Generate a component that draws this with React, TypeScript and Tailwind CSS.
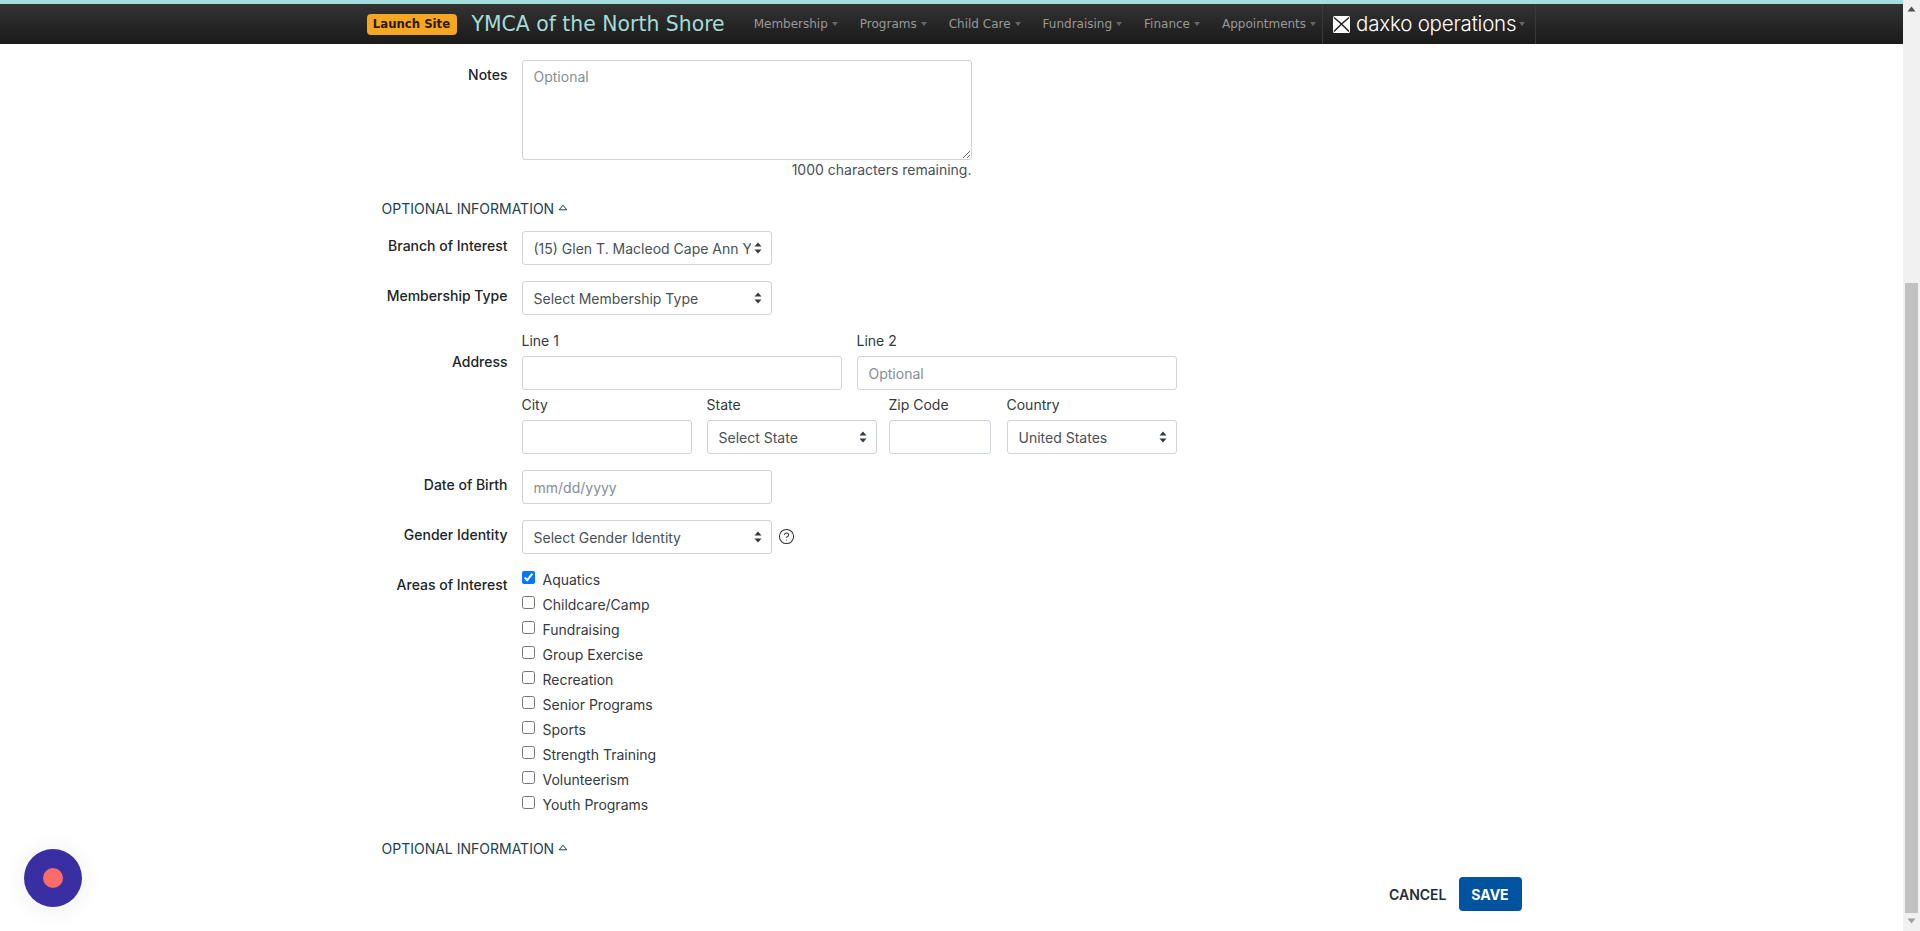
import React from "react";
import { CircleHelp } from "lucide-react";

const navItems = [
  { label: "Membership", cls: "mr-[22px]" },
  { label: "Programs", cls: "mr-[22px]" },
  { label: "Child Care", cls: "mr-[22px]" },
  { label: "Fundraising", cls: "mr-[22px]" },
  { label: "Finance", cls: "mr-[22px]" },
  { label: "Appointments", cls: "" },
];

const interests = [
  "Aquatics",
  "Childcare/Camp",
  "Fundraising",
  "Group Exercise",
  "Recreation",
  "Senior Programs",
  "Sports",
  "Strength Training",
  "Volunteerism",
  "Youth Programs",
];

const Caret = () => (
  <span className="ml-[4px] inline-block h-0 w-0 border-x-[3.5px] border-t-[4px] border-x-transparent border-t-[#666]" />
);

const Label = ({ children, cls = "" }: { children: React.ReactNode; cls?: string }) => (
  <div className={`w-[126px] shrink-0 text-right text-[14px] font-medium leading-[20px] text-[#212529] ${cls}`}>{children}</div>
);

const Row = ({ label, labelCls, children, cls = "" }: { label: string; labelCls?: string; children: React.ReactNode; cls?: string }) => (
  <div className={`flex gap-[14px] ${cls}`}>
    <Label cls={labelCls}>{label}</Label>
    {children}
  </div>
);

const Select = ({ value, w }: { value: string; w: string }) => (
  <div className={`relative h-[34px] ${w}`}>
    <select
      defaultValue={value}
      className="h-full w-full appearance-none rounded-[3px] border border-[#ced4da] bg-white pl-[11px] pr-[20px] text-[14px] text-[#495057] outline-none"
    >
      <option>{value}</option>
    </select>
    <svg className="pointer-events-none absolute right-[10px] top-[11px]" width="8" height="12" viewBox="0 0 8 12">
      <path d="M4 0.5 L7.5 4.5 H0.5 Z M4 11.5 L0.5 7.5 H7.5 Z" fill="#343a40" />
    </svg>
  </div>
);

const TextInput = ({ w, placeholder }: { w: string; placeholder?: string }) => (
  <input
    type="text"
    placeholder={placeholder}
    className={`h-[34px] rounded-[3px] border border-[#ced4da] bg-white px-[11px] text-[14px] text-[#495057] outline-none placeholder:text-[#868e96] ${w}`}
  />
);

const Field = ({ label, children, cls = "" }: { label: string; children: React.ReactNode; cls?: string }) => (
  <div className={`flex flex-col ${cls}`}>
    <div className="mb-[5px] text-[14px] leading-[20px] text-[#343a40]">{label}</div>
    {children}
  </div>
);

const SectionHead = ({ cls = "" }: { cls?: string }) => (
  <div className={`flex items-center text-[14px] leading-[20px] text-[#24404f] ${cls}`}>
    OPTIONAL INFORMATION
    <svg className="mb-[4px] ml-[4px]" width="10" height="7" viewBox="0 0 10 7">
      <path d="M1.2 5.8 L5 1.2 L8.8 5.8 Z" fill="none" stroke="#24404f" strokeWidth="1" strokeLinejoin="round" />
    </svg>
  </div>
);

export default function App() {
  return (
    <div className="flex h-[931px] w-full overflow-hidden bg-white font-['Inter',sans-serif]">
      <div className="flex min-w-0 flex-1 flex-col">
        <header className="h-[44px] shrink-0 border-t-[4px] border-[#a5dede] bg-gradient-to-b from-[#333333] to-[#1a1a1a]">
          <div className="mx-auto flex h-[40px] w-[1170px] items-center font-['DejaVu_Sans',sans-serif]">
            <span className="flex h-[21px] w-[90px] items-center justify-center rounded-[4px] bg-[#f5a623] font-['DejaVu_Sans_Condensed','DejaVu_Sans',sans-serif] text-[13px] font-bold text-[#2b1a00]">
              Launch Site
            </span>
            <span className="ml-[15px] text-[20.4px] text-[#a3dcd8]">YMCA of the North Shore</span>
            <nav className="ml-[29px] flex items-center text-[12px] text-[#999999]">
              {navItems.map((n) => (
                <span key={n.label} className={`flex items-center ${n.cls}`}>
                  {n.label}
                  <Caret />
                </span>
              ))}
            </nav>
            <div className="ml-[6px] flex h-[40px] w-[214px] items-center border-x border-[#3a3a3a] pl-[10px] text-white">
              <svg className="shrink-0" width="17" height="17" viewBox="0 0 17 17">
                <rect width="17" height="17" rx="1.5" fill="#fff" />
                <path d="M1 1.5 L8.5 8 L16 1.5 M1 15.5 L8.5 8 L16 15.5" fill="none" stroke="#222" strokeWidth="1.5" />
              </svg>
              <span className="ml-[6px] whitespace-nowrap text-[20.5px] font-light leading-[24px] tracking-[-0.2px] font-['Inter',sans-serif]">daxko operations</span>
              <span className="-ml-[1px] flex items-center"><Caret /></span>
            </div>
          </div>
        </header>

        <main className="mx-auto flex w-[1170px] flex-1 flex-col px-[15px] pt-[16px]">
          <Row label="Notes" labelCls="pt-[5px]">
            <div className="flex w-[450px] flex-col">
              <textarea
                placeholder="Optional"
                className="h-[100px] w-full rounded-[3px] border border-[#ced4da] px-[11px] py-[5px] text-[14px] text-[#495057] outline-none placeholder:text-[#868e96]"
              />
              <div className="text-right text-[14px] leading-[20px] text-[#495057]">1000 characters remaining.</div>
            </div>
          </Row>

          <SectionHead cls="mt-[19px]" />

          <Row label="Branch of Interest" labelCls="pt-[5px]" cls="mt-[12px]">
            <Select value="(15) Glen T. Macleod Cape Ann YMCA" w="w-[250px]" />
          </Row>
          <Row label="Membership Type" labelCls="pt-[5px]" cls="mt-[16px]">
            <Select value="Select Membership Type" w="w-[250px]" />
          </Row>

          <Row label="Address" labelCls="pt-[21px]" cls="mt-[16px]">
            <div className="flex w-[655px] flex-col">
              <div className="flex gap-[15px]">
                <Field label="Line 1">
                  <TextInput w="w-[320px]" />
                </Field>
                <Field label="Line 2">
                  <TextInput w="w-[320px]" placeholder="Optional" />
                </Field>
              </div>
              <div className="mt-[5px] flex">
                <Field label="City">
                  <TextInput w="w-[170px]" />
                </Field>
                <Field label="State" cls="ml-[15px]">
                  <Select value="Select State" w="w-[170px]" />
                </Field>
                <Field label="Zip Code" cls="ml-[12px]">
                  <TextInput w="w-[102px]" />
                </Field>
                <Field label="Country" cls="ml-[16px]">
                  <Select value="United States" w="w-[170px]" />
                </Field>
              </div>
            </div>
          </Row>

          <Row label="Date of Birth" labelCls="pt-[5px]" cls="mt-[16px]">
            <TextInput w="w-[250px]" placeholder="mm/dd/yyyy" />
          </Row>

          <Row label="Gender Identity" labelCls="pt-[5px]" cls="mt-[16px]">
            <Select value="Select Gender Identity" w="w-[250px]" />
            <CircleHelp className="-ml-[8px] mt-[7.5px] text-[#333]" size={17} strokeWidth={1.5} />
          </Row>

          <Row label="Areas of Interest" labelCls="pt-[5px]" cls="mt-[16px]">
            <div className="flex flex-col">
              {interests.map((item, i) => (
                <label key={item} className="flex h-[25px] items-start text-[14px] leading-[25px] text-[#343a40]">
                  <input type="checkbox" defaultChecked={i === 0} className="mr-[8px] mt-[0.5px] h-[13px] w-[13px]" />
                  <span className="-mt-[3px]">{item}</span>
                </label>
              ))}
            </div>
          </Row>

          <SectionHead cls="mt-[19px]" />

          <div className="mt-[18px] flex items-center justify-end">
            <span className="mr-[12px] text-[14px] font-semibold text-[#1f2d3d]">CANCEL</span>
            <button className="h-[34px] w-[63px] rounded-[4px] bg-[#00539f] text-[14px] font-bold text-white">SAVE</button>
          </div>
        </main>
      </div>

      <aside className="flex h-full w-[17px] shrink-0 flex-col items-center bg-[#f1f1f1]">
        <svg className="mt-[6px]" width="9" height="6" viewBox="0 0 9 6">
          <path d="M4.5 0.5 L8.5 5.5 H0.5 Z" fill="#505050" />
        </svg>
        <div className="mt-[271px] h-[630px] w-[13px] bg-[#c1c1c1]" />
        <svg className="mt-[5px]" width="9" height="6" viewBox="0 0 9 6">
          <path d="M4.5 5.5 L0.5 0.5 H8.5 Z" fill="#a0a0a0" />
        </svg>
      </aside>

      <div className="fixed left-[24px] top-[849px] flex h-[58px] w-[58px] items-center justify-center rounded-full bg-[#3a2ea3] shadow-[0_2px_24px_rgba(0,0,0,0.08)]">
        <div className="h-[20px] w-[20px] rounded-full bg-[#fb6b6b]" />
      </div>
    </div>
  );
}
